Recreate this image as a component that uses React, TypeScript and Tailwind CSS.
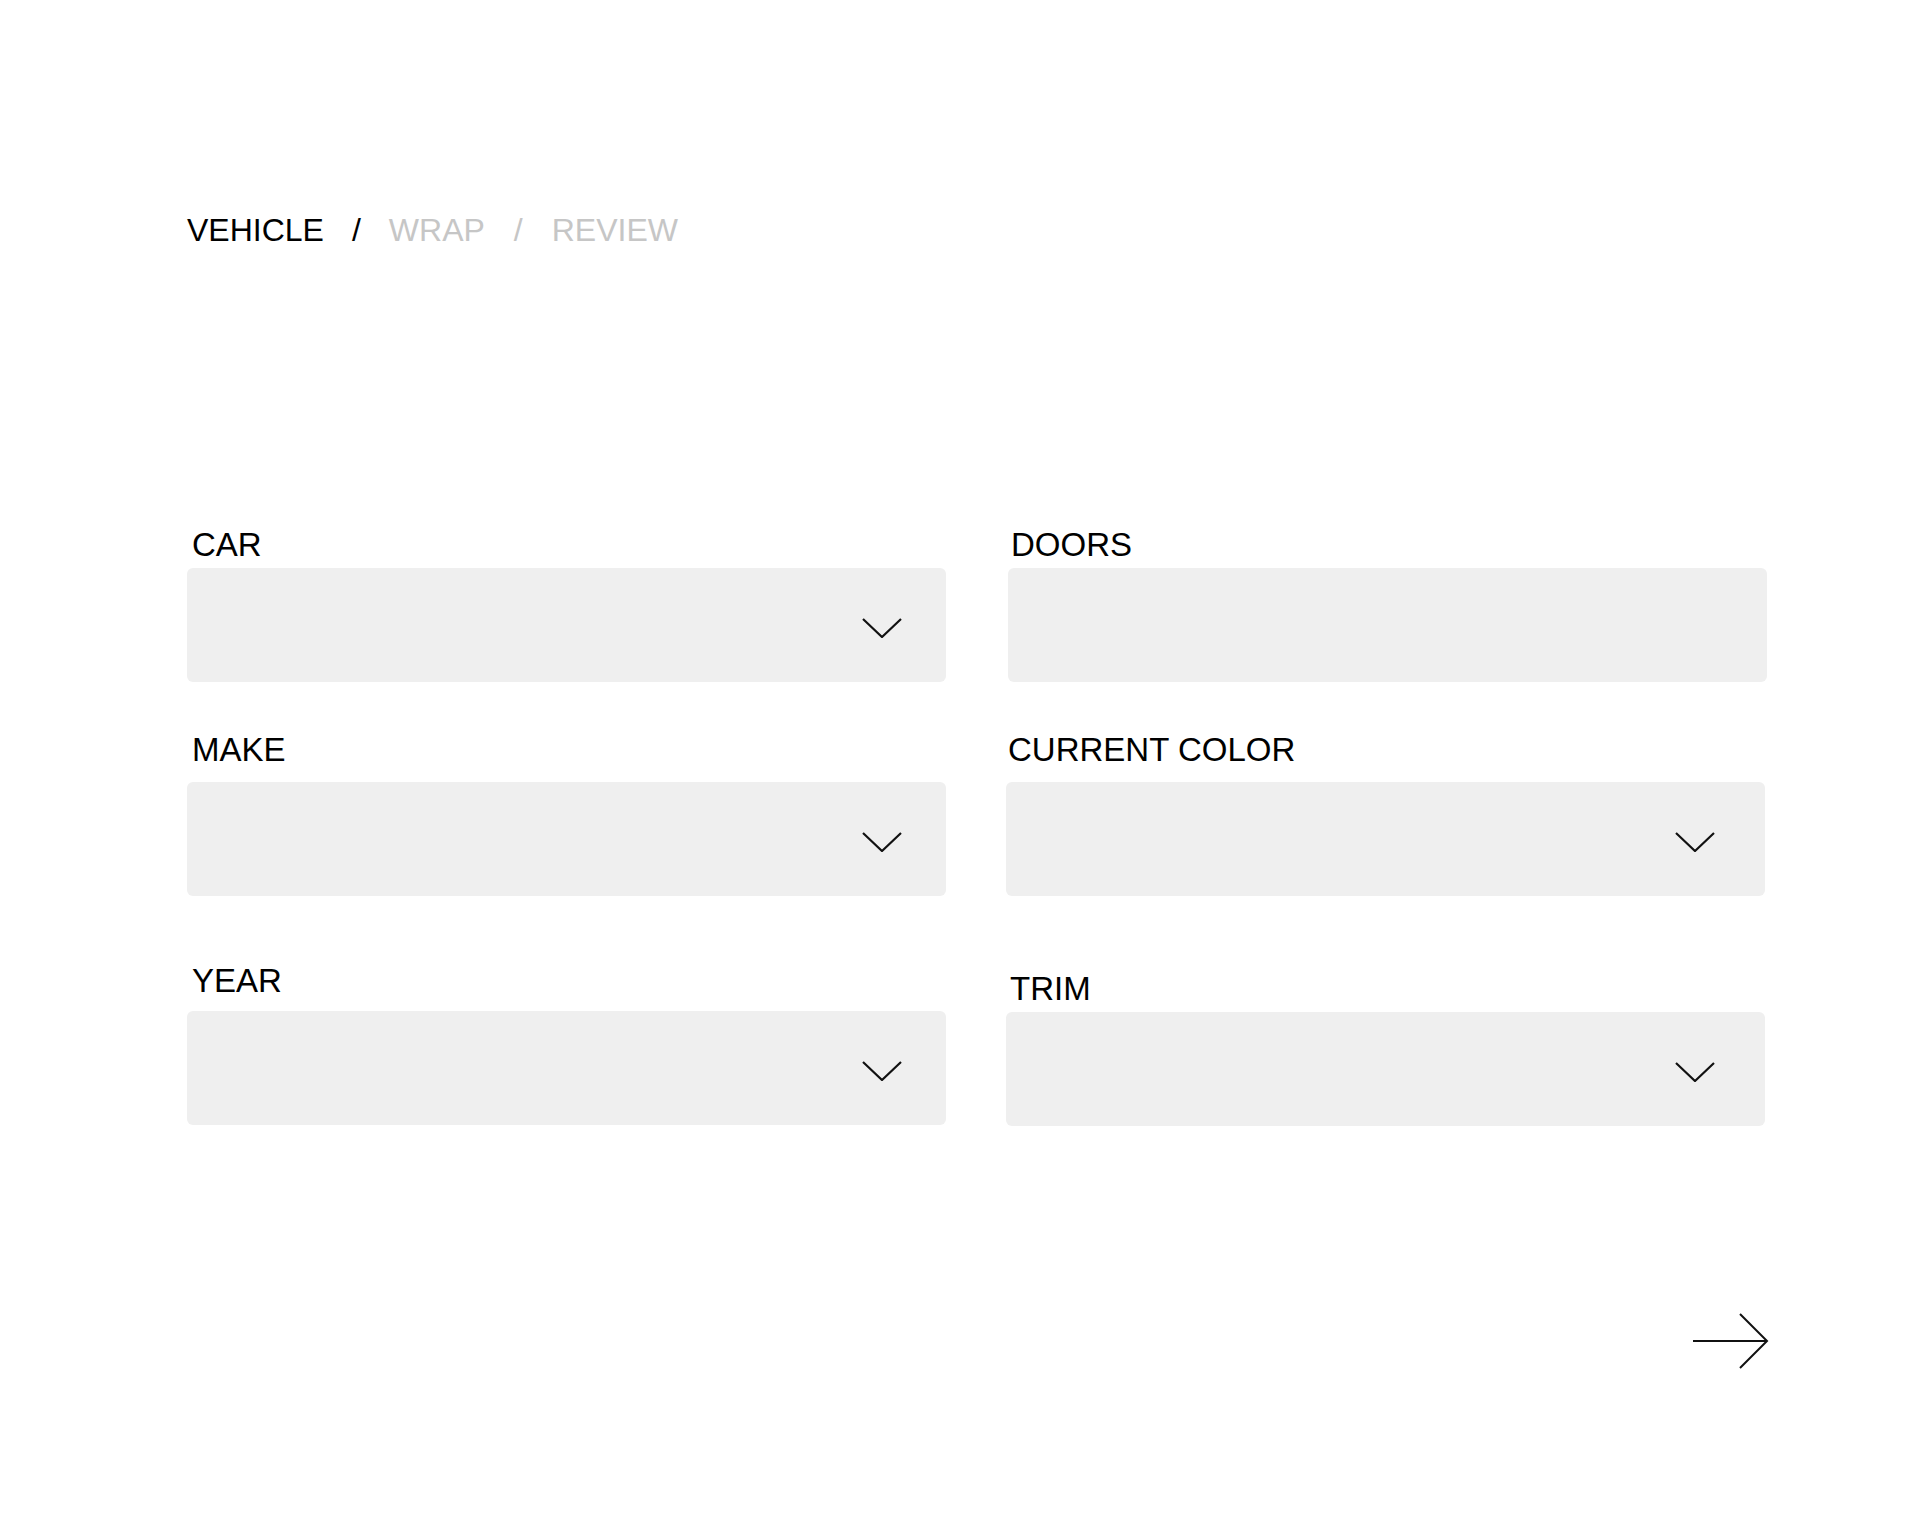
import React from "react";

const font = { fontFamily: '"Liberation Sans", Arial, sans-serif' };

function Chevron() {
  return (
    <svg width="40" height="20" viewBox="0 0 40 20" fill="none" className="mt-1.5">
      <path d="M1 1 L20 19 L39 1" stroke="#111" strokeWidth="2.2" />
    </svg>
  );
}

function Field({
  label,
  select = true,
  top,
  gap,
  pad,
  right,
}: {
  label: string;
  select?: boolean;
  top: string;
  gap: string;
  pad: string;
  right: string;
}) {
  return (
    <div className={`flex flex-col ${top}`}>
      <label className={`${pad} text-[33px] leading-none text-black`}>{label}</label>
      <div
        className={`${gap} ${right} flex h-[114px] items-center justify-end rounded-md bg-[#efefef]`}
      >
        {select && <Chevron />}
      </div>
    </div>
  );
}

export default function App() {
  return (
    <div className="min-h-[1529px] w-full bg-white" style={font}>
      <div className="pl-[187px] pr-[153px] pt-[214px]">
        <nav className="flex items-center text-[32px] leading-none">
          <span className="text-black">VEHICLE</span>
          <span className="mx-[28px] text-black">/</span>
          <span className="text-[#c6c6c6]">WRAP</span>
          <span className="mx-[29px] text-[#c6c6c6]">/</span>
          <span className="text-[#c6c6c6]">REVIEW</span>
        </nav>

        <div className="mt-[282px] grid grid-cols-[759px_759px] gap-x-[60px]">
          <div className="flex flex-col">
            <Field label="CAR" top="mt-0" gap="mt-[7px]" pad="pl-[5px]" right="pr-[44px]" />
            <Field label="MAKE" top="mt-[51px]" gap="mt-[16px]" pad="pl-[5px]" right="pr-[44px]" />
            <Field label="YEAR" top="mt-[68px]" gap="mt-[14px]" pad="pl-[5px]" right="pr-[44px]" />
          </div>
          <div className="flex flex-col">
            <div className="translate-x-[2px]">
              <Field
                label="DOORS"
                select={false}
                top="mt-0"
                gap="mt-[7px]"
                pad="pl-[3px]"
                right="pr-[50px]"
              />
            </div>
            <Field
              label="CURRENT COLOR"
              top="mt-[51px]"
              gap="mt-[16px]"
              pad="pl-[2px]"
              right="pr-[50px]"
            />
            <Field label="TRIM" top="mt-[76px]" gap="mt-[7px]" pad="pl-[4px]" right="pr-[50px]" />
          </div>
        </div>

        <div className="mt-[187px] flex justify-end">
          <button aria-label="Next" className="-mr-[2px]">
            <svg width="76" height="56" viewBox="0 0 76 56" fill="none">
              <path d="M0 28 H74" stroke="#111" strokeWidth="2" />
              <path d="M47 1 L74 28 L47 55" stroke="#111" strokeWidth="2" />
            </svg>
          </button>
        </div>
      </div>
    </div>
  );
}
